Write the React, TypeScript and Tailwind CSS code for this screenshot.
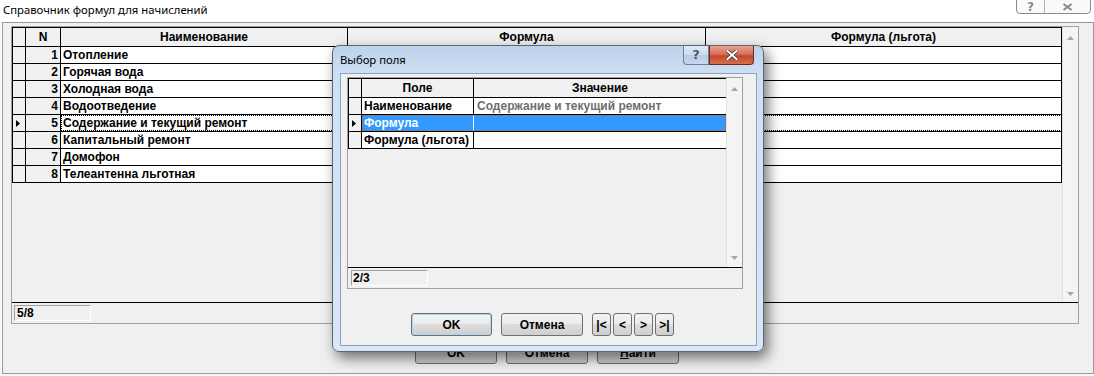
import React from "react";

const rows = [
  "Отопление",
  "Горячая вода",
  "Холодная вода",
  "Водоотведение",
  "Содержание и текущий ремонт",
  "Капитальный ремонт",
  "Домофон",
  "Телеантенна льготная",
];

function RowMark() {
  return (
    <svg width="4" height="7" viewBox="0 0 4 7">
      <path d="M0 0 L4 3.5 L0 7 Z" fill="#000" />
    </svg>
  );
}

function ArrowUp() {
  return (
    <svg width="7" height="4" viewBox="0 0 7 4">
      <path d="M0 4 L3.5 0 L7 4 Z" fill="#a6a6a6" />
    </svg>
  );
}

function ArrowDown() {
  return (
    <svg width="7" height="4" viewBox="0 0 7 4">
      <path d="M0 0 L3.5 4 L7 0 Z" fill="#a6a6a6" />
    </svg>
  );
}

const btn =
  "h-[23px] border border-[#707070] rounded-[3px] bg-[linear-gradient(#f2f2f2,#ebebeb_50%,#dddddd_50%,#cfcfcf)] flex items-center justify-center text-[12px] font-bold text-black";

function MainGrid() {
  return (
    <div className="ml-[8px] mt-[3px] w-[1068px] h-[298px] border border-[#a0a0a0] flex flex-col">
      <div className="flex h-[276px] border-b border-black">
        <div className="w-[1050px] flex flex-col">
          {/* header */}
          <div className="flex h-[20px] border-t border-b border-l border-black bg-[#f0f0f0] text-[12px] font-bold leading-[18px]">
            <div className="w-[13px] border-r border-black" />
            <div className="w-[35px] border-r border-black text-center">N</div>
            <div className="w-[287px] border-r border-black text-center">Наименование</div>
            <div className="w-[358px] border-r border-black text-center">Формула</div>
            <div className="w-[356px] border-r border-black text-center">Формула (льгота)</div>
          </div>
          {rows.map((r, i) => (
            <div
              key={i}
              className="flex h-[17px] border-b border-l border-black text-[12px] font-bold leading-[16px]"
            >
              <div className="w-[13px] border-r border-black bg-[#f0f0f0] flex items-center pl-[3px]">
                {i === 4 && <RowMark />}
              </div>
              <div className="w-[35px] border-r border-black bg-[#f0f0f0] text-right pr-[2px]">
                {i + 1}
              </div>
              <div
                className={
                  "flex bg-white " +
                  (i === 4 ? "outline-1 outline-dotted outline-black -outline-offset-1" : "")
                }
              >
                <div className="w-[287px] border-r border-black pl-[2px] whitespace-nowrap">{r}</div>
                <div className="w-[358px] border-r border-black" />
                <div className="w-[356px] border-r border-black" />
              </div>
            </div>
          ))}
        </div>
        <div className="w-[16px] bg-[#f4f4f4] border-l border-[#e2e2e2] flex flex-col items-center justify-between pt-[9px] pb-[6px]">
          <ArrowUp />
          <ArrowDown />
        </div>
      </div>
      <div className="h-[20px] pt-[2px] pl-[2px]">
        <div className="w-[77px] h-[16px] border-t border-l border-[#a0a0a0] border-b border-r border-b-white border-r-white text-[12px] font-bold leading-[14px] pl-[2px]">
          5/8
        </div>
      </div>
    </div>
  );
}

function DialogGrid() {
  const drows: { f: string; v: string; sel?: boolean }[] = [
    { f: "Наименование", v: "Содержание и текущий ремонт" },
    { f: "Формула", v: "", sel: true },
    { f: "Формула (льгота)", v: "" },
  ];
  return (
    <div className="ml-[6px] mt-[3px] w-[396px] h-[212px] border border-[#a0a0a0] bg-[#f0f0f0] flex flex-col">
      <div className="flex h-[190px] border-b border-black">
        <div className="w-[378px] flex flex-col">
          <div className="flex h-[20px] border-t border-b border-l border-black bg-[#f0f0f0] text-[12px] font-bold leading-[18px]">
            <div className="w-[13px] border-r border-black" />
            <div className="w-[112px] border-r border-black text-center">Поле</div>
            <div className="w-[252px] text-center">Значение</div>
          </div>
          {drows.map((d, i) => (
            <div
              key={i}
              className="flex h-[17px] border-b border-l border-black text-[12px] font-bold leading-[16px]"
            >
              <div className="w-[13px] border-r border-black bg-[#f0f0f0] flex items-center pl-[3px]">
                {d.sel && <RowMark />}
              </div>
              <div
                className={
                  "flex " +
                  (d.sel
                    ? "bg-[#3399ff] outline-1 outline-dotted outline-[#c06a2a] -outline-offset-1"
                    : "bg-white")
                }
              >
                <div
                  className={
                    "w-[112px] border-r pl-[2px] whitespace-nowrap " +
                    (d.sel ? "border-white text-white" : "border-black text-black")
                  }
                >
                  {d.f}
                </div>
                <div className="w-[252px] pl-[3px] text-[#6e6e6e] whitespace-nowrap">{d.v}</div>
              </div>
            </div>
          ))}
        </div>
        <div className="w-[16px] bg-[#f4f4f4] border-l border-[#e2e2e2] flex flex-col items-center justify-between pt-[9px] pb-[7px]">
          <ArrowUp />
          <ArrowDown />
        </div>
      </div>
      <div className="h-[20px] pt-[2px] pl-[3px]">
        <div className="w-[77px] h-[16px] border-t border-l border-[#a0a0a0] border-b border-r border-b-white border-r-white text-[12px] font-bold leading-[14px] pl-[1px]">
          2/3
        </div>
      </div>
    </div>
  );
}

function Dialog() {
  return (
    <div className="absolute left-[332px] top-[45px] w-[432px] h-[307px] rounded-[7px] border border-[#5b6672] bg-[linear-gradient(180deg,#bcd3ec,#cfe0f3_30px,#d9e7f6)] shadow-[4px_6px_14px_rgba(0,0,0,0.55)]">
      {/* caption buttons */}
      <div className="absolute left-[350px] top-0 w-[26px] h-[19px] border border-[#6f819a] border-t-0 rounded-bl-[4px] bg-[linear-gradient(#dfe9f5,#c9d9ec_50%,#b7cbe2_50%,#c7d8ec)] flex items-center justify-center text-[13px] font-bold text-[#4a5a6e] font-['DejaVu_Sans',sans-serif]">
        ?
      </div>
      <div className="absolute left-[376px] top-0 w-[45px] h-[19px] border border-[#6b2b22] border-t-0 rounded-br-[4px] bg-[linear-gradient(#e6a190,#d8715b_45%,#c6452d_55%,#d4704f)] flex items-center justify-center">
        <svg width="12" height="10" viewBox="0 0 12 10">
          <path d="M1.5 1 L10.5 9 M10.5 1 L1.5 9" stroke="#3b3b3b" strokeWidth="3.6" strokeLinecap="square" />
          <path d="M1.5 1 L10.5 9 M10.5 1 L1.5 9" stroke="#ffffff" strokeWidth="2" strokeLinecap="square" />
        </svg>
      </div>
      <div className="h-[27px] pl-[7px] pt-[6px] font-['Noto_Sans',sans-serif] text-[11.3px] leading-[16px] text-black">
        Выбор поля
      </div>
      <div className="ml-[7px] w-[417px] h-[273px] border border-[#8aa2bd] bg-[#f0f0f0] flex flex-col">
        <DialogGrid />
        <div className="mt-[24px] pl-[70px] flex items-center">
          <div className={btn + " w-[81px] border-[#3c7fb1] bg-[linear-gradient(#eef5fb,#e2edf6_50%,#d3e3f0_50%,#c8dbec)] shadow-[inset_0_0_0_1px_#a9d6f3]"}>
            OK
          </div>
          <div className={btn + " w-[82px] ml-[9px]"}>Отмена</div>
          <div className={btn + " w-[19px] ml-[9px]"}>|&lt;</div>
          <div className={btn + " w-[19px] ml-[2px]"}>&lt;</div>
          <div className={btn + " w-[19px] ml-[2px]"}>&gt;</div>
          <div className={btn + " w-[19px] ml-[2px]"}>&gt;|</div>
        </div>
      </div>
    </div>
  );
}

export default function App() {
  return (
    <div className="relative w-[1094px] h-[376px] overflow-hidden bg-[#f4f9fe] font-['Liberation_Sans',Arial,sans-serif] text-black">
      <div className="h-[22px] bg-white pl-[3px] pt-[2px] font-['Noto_Sans',sans-serif] text-[11.3px] leading-[16px]">
        Справочник формул для начислений
      </div>
      <div className="absolute left-[1016px] top-[-6px] w-[75px] h-[20px] border border-[#8b8b8b] rounded-b-[4px] bg-[#fafafa] flex">
        <div className="w-[28px] border-r border-[#b5b5b5] flex items-center justify-center pt-[5px] text-[12px] font-bold text-[#8a8a8a] font-['DejaVu_Sans',sans-serif]">
          ?
        </div>
        <div className="flex-1 flex items-center justify-center pt-[5px]">
          <svg width="11" height="8" viewBox="0 0 11 8">
            <path d="M1.5 1 L9.5 7 M9.5 1 L1.5 7" stroke="#8a8a8a" strokeWidth="2" />
          </svg>
        </div>
      </div>
      <div className="ml-[2px] w-[1092px] h-[352px] bg-[#f0f0f0] border border-[#9a9a9a] flex flex-col">
        <MainGrid />
        <div className="mt-[17px] pl-[412px] flex gap-[9px]">
          <div className={btn + " w-[82px]"}>OK</div>
          <div className={btn + " w-[82px]"}>Отмена</div>
          <div className={btn + " w-[82px] font-bold"}>
            <span>
              <span className="underline">Н</span>айти
            </span>
          </div>
        </div>
      </div>
      <Dialog />
    </div>
  );
}
